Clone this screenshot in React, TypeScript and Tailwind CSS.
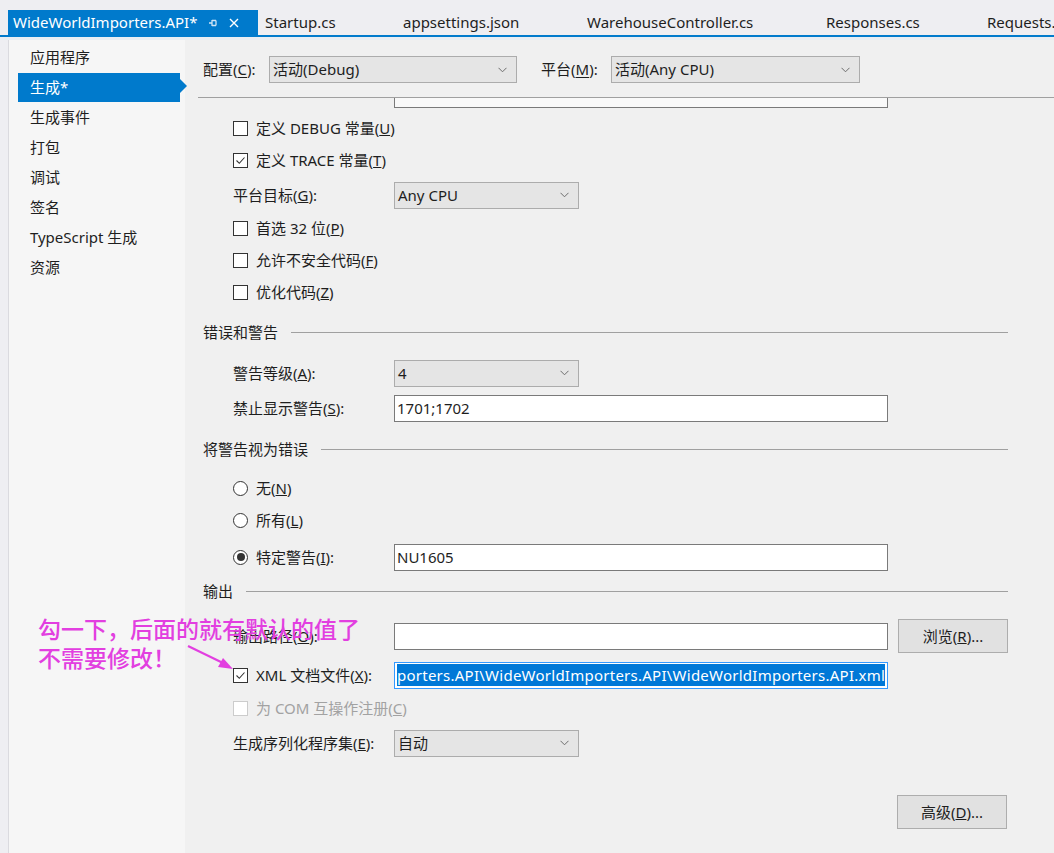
import React from 'react'

const ui = "font-[family-name:'Noto_Sans','Noto_Sans_CJK_SC',sans-serif]"

function Check({ checked = false, disabled = false }: { checked?: boolean; disabled?: boolean }) {
  return (
    <span
      className={`inline-flex w-[15px] h-[15px] items-center justify-center border bg-white ${
        disabled ? 'border-[#cccccc] bg-[#f0f0f0]' : 'border-[#333333]'
      }`}
    >
      {checked && (
        <svg width="11" height="11" viewBox="0 0 11 11">
          <path d="M1.5 5.5 L4.3 8.3 L9.5 2.5" fill="none" stroke="#333" strokeWidth="1.1" />
        </svg>
      )}
    </span>
  )
}

function Radio({ checked = false }: { checked?: boolean }) {
  return (
    <span className="inline-flex w-[15px] h-[15px] items-center justify-center rounded-full border border-[#333333] bg-white">
      {checked && <span className="w-[8px] h-[8px] rounded-full bg-[#333333]" />}
    </span>
  )
}

function Select({ value, w }: { value: string; w: string }) {
  return (
    <div className={`${w} h-[27px] flex items-center justify-between border border-[#acacac] bg-[#e5e5e5] pl-[3px] pr-[9px] text-[#1e1e1e]`}>
      <span>{value}</span>
      <svg width="9" height="6" viewBox="0 0 9 6">
        <path d="M0.5 0.8 L4.5 4.8 L8.5 0.8" fill="none" stroke="#6d6d6d" strokeWidth="1" />
      </svg>
    </div>
  )
}

function TextBox({ value = '' }: { value?: string }) {
  return (
    <div className="w-[494px] h-[27px] flex items-center border border-[#7a7a7a] bg-white px-[2px] text-[#1e1e1e]">
      {value}
    </div>
  )
}

function Button({ children }: { children: React.ReactNode }) {
  return (
    <div className="w-[110px] h-[34px] flex items-center justify-center border border-[#adadad] bg-[#e1e1e1] text-[#1e1e1e]">
      {children}
    </div>
  )
}

function Section({ title }: { title: string }) {
  return (
    <div className="h-[32px] flex items-center gap-[13px]">
      <span>{title}</span>
      <div className="flex-1 h-px bg-[#a0a0a0]" />
    </div>
  )
}

function CheckRow({ children, checked, disabled, mt }: { children: React.ReactNode; checked?: boolean; disabled?: boolean; mt: string }) {
  return (
    <div className={`h-[32px] ${mt} pl-[30px] flex items-center gap-[8px] ${disabled ? 'text-[#a2a2a2]' : ''}`}>
      <Check checked={checked} disabled={disabled} />
      <span>{children}</span>
    </div>
  )
}

function FieldRow({ label, children, mt }: { label: React.ReactNode; children: React.ReactNode; mt: string }) {
  return (
    <div className={`h-[32px] ${mt} flex items-center`}>
      <div className="w-[191px] pl-[30px]">{label}</div>
      {children}
    </div>
  )
}

const tabs = [
  { name: 'Startup.cs', w: 'w-[138px]' },
  { name: 'appsettings.json', w: 'w-[184px]' },
  { name: 'WarehouseController.cs', w: 'w-[239px]' },
  { name: 'Responses.cs', w: 'w-[161px]' },
  { name: 'Requests.cs', w: 'w-[120px]' },
]

const pages = ['应用程序', '生成*', '生成事件', '打包', '调试', '签名', 'TypeScript 生成', '资源']

export default function App() {
  return (
    <div className={`${ui} relative w-[1054px] h-[853px] overflow-hidden bg-[#eeeef2] text-[15px] text-[#1e1e1e] flex flex-col`}>
      {/* document tabs */}
      <div className="mt-[10px] h-[25px] flex pl-[8px] whitespace-nowrap overflow-hidden">
        <div className="w-[250px] shrink-0 bg-[#007acc] text-white flex items-center pl-[5px]">
          <span>WideWorldImporters.API*</span>
          <svg className="ml-[11px]" width="10" height="10" viewBox="0 0 10 10">
            <path d="M1 5 H4 M4 2 V8 M4 2.5 H8 M4 7.5 H8 M8 2.5 V7.5" fill="none" stroke="#cfe4f5" strokeWidth="1.3" />
          </svg>
          <svg className="ml-[11px]" width="10" height="10" viewBox="0 0 10 10">
            <path d="M1 1 L9 9 M9 1 L1 9" stroke="#ffffff" strokeWidth="1.4" />
          </svg>
        </div>
        {tabs.map((t) => (
          <div key={t.name} className={`${t.w} shrink-0 flex items-center pl-[7px]`}>
            {t.name}
          </div>
        ))}
      </div>
      <div className="h-[2px] bg-[#007acc]" />
      <div className="h-[3px] bg-[#e8edf3]" />

      <div className="flex-1 flex">
        <div className="w-[9px] border-r border-[#dadadf]" />
        {/* property pages */}
        <div className="w-[178px] bg-[#f6f6f6] pt-[2px]">
          {pages.map((p) => (
            <div key={p} className="relative h-[30px] flex items-center">
              {p === '生成*' ? (
                <div className="ml-[9px] w-[162px] h-[29px] bg-[#007acc] text-white flex items-center pl-[12px]">
                  {p}
                  <span className="absolute left-[171px] top-[7px] w-0 h-0 border-y-[7px] border-y-transparent border-l-[7px] border-l-[#007acc]" />
                </div>
              ) : (
                <span className="pl-[21px]">{p}</span>
              )}
            </div>
          ))}
        </div>

        {/* build page */}
        <div className="flex-1 bg-[#f0f0f0] flex flex-col">
          <div className="h-[57px] pl-[18px] flex items-center pt-[2px]">
            <span className="w-[66px]">
              配置(<u className="underline-offset-2">C</u>):
            </span>
            <Select value="活动(Debug)" w="w-[248px]" />
            <span className="ml-[24px] w-[70px]">
              平台(<u className="underline-offset-2">M</u>):
            </span>
            <Select value="活动(Any CPU)" w="w-[249px]" />
          </div>
          <div className="ml-[13px] h-px bg-[#a0a0a0]" />

          <div className="pl-[18px] pr-[46px] flex flex-col">
            <div className="ml-[191px] w-[494px] h-[10px] border-x border-b border-[#7a7a7a] bg-[#f9f9f9]" />

            <CheckRow mt="mt-[4px]">
              定义 DEBUG 常量(<u>U</u>)
            </CheckRow>
            <CheckRow mt="mt-0" checked>
              定义 TRACE 常量(<u>T</u>)
            </CheckRow>
            <FieldRow mt="mt-[3px]" label={<>平台目标(<u>G</u>):</>}>
              <Select value="Any CPU" w="w-[185px]" />
            </FieldRow>
            <CheckRow mt="mt-[1px]">
              首选 32 位(<u>P</u>)
            </CheckRow>
            <CheckRow mt="mt-0">
              允许不安全代码(<u>F</u>)
            </CheckRow>
            <CheckRow mt="mt-0">
              优化代码(<u>Z</u>)
            </CheckRow>

            <div className="mt-[8px]">
              <Section title="错误和警告" />
            </div>
            <FieldRow mt="mt-[9px]" label={<>警告等级(<u>A</u>):</>}>
              <Select value="4" w="w-[185px]" />
            </FieldRow>
            <FieldRow mt="mt-[3px]" label={<>禁止显示警告(<u>S</u>):</>}>
              <TextBox value="1701;1702" />
            </FieldRow>

            <div className="mt-[9px]">
              <Section title="将警告视为错误" />
            </div>
            <div className="h-[32px] mt-[7px] pl-[30px] flex items-center gap-[8px]">
              <Radio />
              <span>
                无(<u>N</u>)
              </span>
            </div>
            <div className="h-[32px] pl-[30px] flex items-center gap-[8px]">
              <Radio />
              <span>
                所有(<u>L</u>)
              </span>
            </div>
            <div className="h-[32px] mt-[5px] flex items-center">
              <div className="w-[191px] pl-[30px] flex items-center gap-[8px]">
                <Radio checked />
                <span>
                  特定警告(<u>I</u>):
                </span>
              </div>
              <TextBox value="NU1605" />
            </div>

            <div className="mt-[2px]">
              <Section title="输出" />
            </div>
            <FieldRow mt="mt-[13px]" label={<>输出路径(<u>O</u>):</>}>
              <TextBox />
              <div className="ml-[10px]">
                <Button>
                  浏览(<u>R</u>)...
                </Button>
              </div>
            </FieldRow>
            <div className="h-[32px] mt-[7px] flex items-center">
              <div className="w-[191px] pl-[30px] flex items-center gap-[8px]">
                <Check checked />
                <span>
                  XML 文档文件(<u>X</u>):
                </span>
              </div>
              <div className="w-[494px] h-[27px] flex items-center border border-[#3399ff] bg-white px-[2px] overflow-hidden whitespace-nowrap">
                <span className="bg-[#0078d7] text-white tracking-[0.25px]">porters.API\WideWorldImporters.API\WideWorldImporters.API.xml</span>
              </div>
            </div>
            <CheckRow mt="mt-[1px]" disabled>
              为 COM 互操作注册(<u>C</u>)
            </CheckRow>
            <FieldRow mt="mt-[3px]" label={<>生成序列化程序集(<u>E</u>):</>}>
              <Select value="自动" w="w-[185px]" />
            </FieldRow>
            <div className="mt-[36px] flex justify-end pr-px">
              <Button>
                高级(<u>D</u>)...
              </Button>
            </div>
          </div>
        </div>
      </div>

      {/* screenshot annotation */}
      <div className="absolute left-[38px] top-[614px] text-[23px] leading-[29px] font-medium text-[#e23fe0] font-[family-name:'Noto_Sans_CJK_SC',sans-serif]">
        <div>勾一下，后面的就有默认的值了</div>
        <div>不需要修改！</div>
      </div>
      <svg className="absolute left-[185px] top-[642px]" width="52" height="32" viewBox="0 0 52 32">
        <path d="M3 4 L38 21" stroke="#e23fe0" strokeWidth="2.2" />
        <path d="M48 27 L33 25 L38 16 Z" fill="#e23fe0" />
      </svg>
    </div>
  )
}
